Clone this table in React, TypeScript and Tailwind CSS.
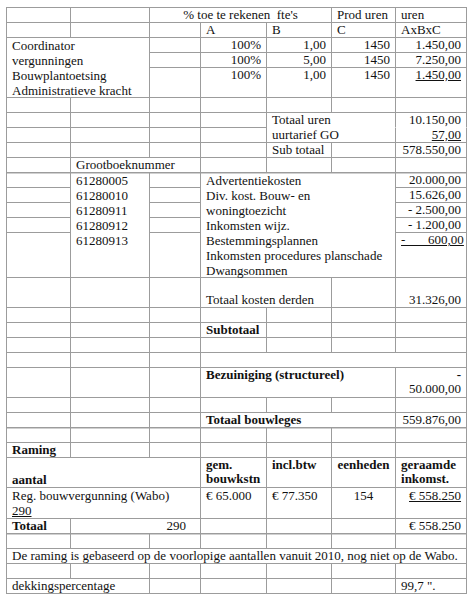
import React from 'react';

type CellProps = {
  children?: React.ReactNode;
  colSpan?: number;
  rowSpan?: number;
  align?: 'left' | 'right' | 'center';
  bold?: boolean;
  noB?: boolean;
  thick?: boolean;
  bottom?: boolean;
  className?: string;
};

const alignClass = {
  left: 'text-left',
  right: 'text-right',
  center: 'text-center',
};

const Cell: React.FC<CellProps> = ({ children, colSpan, rowSpan, align = 'left', bold, noB, thick, bottom, className = '' }) => (
  <td
    colSpan={colSpan}
    rowSpan={rowSpan}
    className={[
      'border-r border-b border-r-[#9c9c9c] px-[5px] py-0 leading-[14px] whitespace-nowrap',
      noB ? 'border-b-transparent' : 'border-b-[#9c9c9c]',
      thick ? 'shadow-[0_1px_0_#d0d0d0]' : '',
      bottom ? 'align-bottom' : 'align-top',
      bold ? 'font-bold' : '',
      alignClass[align],
      className,
    ].join(' ')}
  >
    {children}
  </td>
);

const Empty: React.FC<{ n: number; thick?: boolean }> = ({ n, thick }) => (
  <>
    {Array.from({ length: n }).map((_, i) => (
      <Cell key={i} thick={thick} />
    ))}
  </>
);

export default function App() {
  return (
    <div className="min-h-[600px] w-[476px] bg-white pl-[6px] pt-[7px] font-['Liberation_Serif',serif] text-[13px] text-[#111]">
      <table className="w-[461px] table-fixed border-separate border-spacing-0 border-l border-t border-[#9c9c9c]">
        <colgroup>
          <col className="w-[64px]" />
          <col className="w-[79px]" />
          <col className="w-[51px]" />
          <col className="w-[66px]" />
          <col className="w-[65px]" />
          <col className="w-[64px]" />
          <col className="w-[71px]" />
        </colgroup>
        <tbody>
          <tr className="h-[15px]">
            <Empty n={2} />
            <Cell colSpan={3} align="center">
              <span className="whitespace-pre">% toe te rekenen  fte's</span>
            </Cell>
            <Cell>Prod uren</Cell>
            <Cell>uren</Cell>
          </tr>
          <tr className="h-[15px]">
            <Empty n={3} />
            <Cell>A</Cell>
            <Cell>B</Cell>
            <Cell>C</Cell>
            <Cell>AxBxC</Cell>
          </tr>
          <tr className="h-[15px]">
            <Cell colSpan={2} rowSpan={3}>
              <div className="h-[59px] leading-[15px]">
                Coordinator
                <br />
                vergunningen
                <br />
                Bouwplantoetsing
                <br />
                Administratieve kracht
              </div>
            </Cell>
            <Cell />
            <Cell align="right">100%</Cell>
            <Cell align="right">1,00</Cell>
            <Cell align="right">1450</Cell>
            <Cell align="right">1.450,00</Cell>
          </tr>
          <tr className="h-[15px]">
            <Cell />
            <Cell align="right">100%</Cell>
            <Cell align="right">5,00</Cell>
            <Cell align="right">1450</Cell>
            <Cell align="right">7.250,00</Cell>
          </tr>
          <tr className="h-[30px]">
            <Cell />
            <Cell align="right">100%</Cell>
            <Cell align="right">1,00</Cell>
            <Cell align="right">1450</Cell>
            <Cell align="right">
              <span className="underline">1.450,00</span>
            </Cell>
          </tr>
          <tr className="h-[15px]">
            <Empty n={7} />
          </tr>
          <tr className="h-[15px]">
            <Empty n={4} />
            <Cell colSpan={2} noB>Totaal uren</Cell>
            <Cell align="right" noB>10.150,00</Cell>
          </tr>
          <tr className="h-[15px]">
            <Empty n={4} />
            <Cell colSpan={2}>uurtarief GO</Cell>
            <Cell align="right">
              <span className="underline">57,00</span>
            </Cell>
          </tr>
          <tr className="h-[15px]">
            <Empty n={4} />
            <Cell>Sub totaal</Cell>
            <Cell />
            <Cell align="right">578.550,00</Cell>
          </tr>
          <tr className="h-[15px]">
            <Cell thick />
            <Cell colSpan={2} thick>Grootboeknummer</Cell>
            <Empty n={4} thick />
          </tr>
          <tr className="h-[15px]">
            <Cell />
            <Cell rowSpan={7}>
              <div className="h-[104px] leading-[15px]">
                61280005
                <br />
                61280010
                <br />
                61280911
                <br />
                61280912
                <br />
                61280913
              </div>
            </Cell>
            <Cell />
            <Cell colSpan={3} rowSpan={7}>
              <div className="h-[104px] leading-[15px]">
                Advertentiekosten
                <br />
                Div. kost. Bouw- en
                <br />
                woningtoezicht
                <br />
                Inkomsten wijz.
                <br />
                Bestemmingsplannen
                <br />
                Inkomsten procedures planschade
                <br />
                Dwangsommen
              </div>
            </Cell>
            <Cell align="right">20.000,00</Cell>
          </tr>
          <tr className="h-[15px]">
            <Cell />
            <Cell />
            <Cell align="right">15.626,00</Cell>
          </tr>
          <tr className="h-[15px]">
            <Cell />
            <Cell />
            <Cell align="right">- 2.500,00</Cell>
          </tr>
          <tr className="h-[15px]">
            <Cell />
            <Cell />
            <Cell align="right">- 1.200,00</Cell>
          </tr>
          <tr className="h-[15px]">
            <Cell rowSpan={3} />
            <Cell rowSpan={3} />
            <Cell align="right" rowSpan={3}>
              <span className="whitespace-pre underline">-       600,00</span>
            </Cell>
          </tr>
          <tr className="h-[15px]" />
          <tr className="h-[15px]" />
          <tr className="h-[30px]">
            <Empty n={3} />
            <Cell colSpan={2} bottom>Totaal kosten derden</Cell>
            <Cell />
            <Cell align="right" bottom>31.326,00</Cell>
          </tr>
          <tr className="h-[15px]">
            <Empty n={7} />
          </tr>
          <tr className="h-[15px]">
            <Empty n={3} />
            <Cell bold>Subtotaal</Cell>
            <Empty n={3} />
          </tr>
          <tr className="h-[15px]">
            <Empty n={7} />
          </tr>
          <tr className="h-[15px]">
            <Empty n={3} />
            <Cell colSpan={4} />
          </tr>
          <tr className="h-[30px]">
            <Empty n={3} />
            <Cell colSpan={3} bold>Bezuiniging (structureel)</Cell>
            <Cell align="right">
              <span className="font-bold">-</span>
              <br />
              50.000,00
            </Cell>
          </tr>
          <tr className="h-[15px]">
            <Empty n={7} />
          </tr>
          <tr className="h-[15px]">
            <Cell thick />
            <Cell thick />
            <Cell thick />
            <Cell colSpan={3} bold thick>Totaal bouwleges</Cell>
            <Cell align="right" thick>559.876,00</Cell>
          </tr>
          <tr className="h-[15px]">
            <Empty n={7} />
          </tr>
          <tr className="h-[15px]">
            <Cell bold>Raming</Cell>
            <Empty n={6} />
          </tr>
          <tr className="h-[30px]">
            <Cell colSpan={3} bold bottom>aantal</Cell>
            <Cell bold>
              gem.
              <br />
              bouwkstn
            </Cell>
            <Cell bold>incl.btw</Cell>
            <Cell bold align="center">eenheden</Cell>
            <Cell bold>
              geraamde
              <br />
              inkomst.
            </Cell>
          </tr>
          <tr className="h-[30px]">
            <Cell colSpan={3} className="leading-[15px]">
              Reg. bouwvergunning (Wabo)
              <br />
              <span className="underline">290</span>
            </Cell>
            <Cell className="leading-[15px]">€ 65.000</Cell>
            <Cell className="leading-[15px]">€ 77.350</Cell>
            <Cell align="center" className="leading-[15px]">154</Cell>
            <Cell align="right" className="leading-[15px]">
              <span className="underline">€ 558.250</span>
            </Cell>
          </tr>
          <tr className="h-[15px]">
            <Cell bold thick>Totaal</Cell>
            <Cell colSpan={2} align="right" thick className="pr-[14px]">290</Cell>
            <Empty n={3} thick />
            <Cell align="right" thick>€ 558.250</Cell>
          </tr>
          <tr className="h-[15px]">
            <Empty n={7} />
          </tr>
          <tr className="h-[15px]">
            <Cell colSpan={7}>De raming is gebaseerd op de voorlopige aantallen vanuit 2010, nog niet op de Wabo.</Cell>
          </tr>
          <tr className="h-[15px]">
            <Empty n={7} />
          </tr>
          <tr className="h-[15px]">
            <Cell colSpan={2}>dekkingspercentage</Cell>
            <Empty n={4} />
            <Cell>99,7 ".</Cell>
          </tr>
        </tbody>
      </table>
    </div>
  );
}
